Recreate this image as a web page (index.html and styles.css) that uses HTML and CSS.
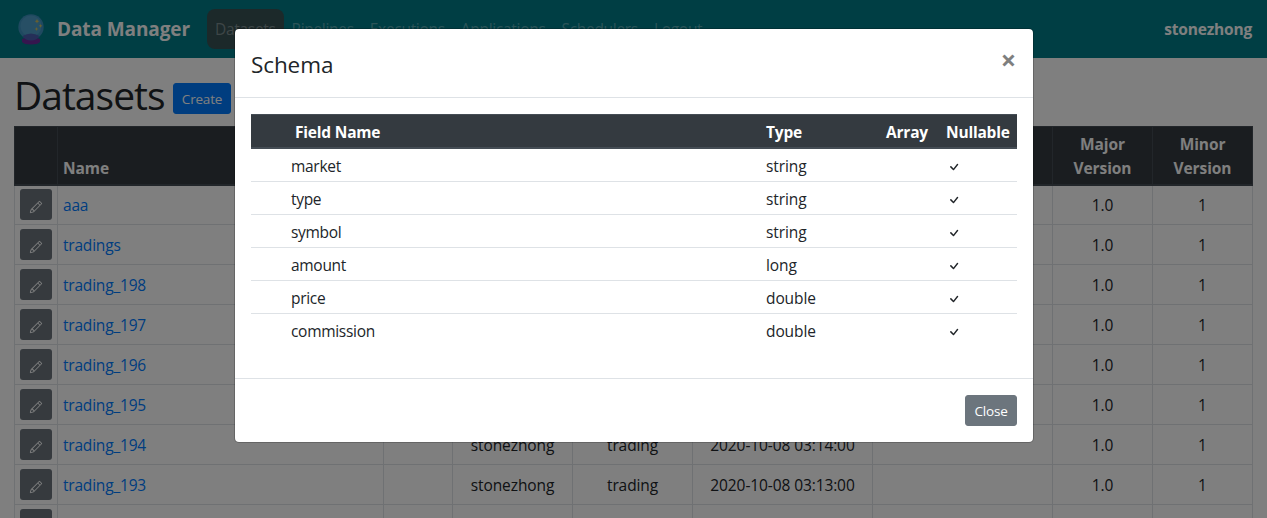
FILE: index.html
```html
<!DOCTYPE html>
<html lang="en">
<head>
<meta charset="utf-8">
<title>Data Manager</title>
<link rel="stylesheet" href="styles.css">
</head>
<body>
<svg class="defs" aria-hidden="true">
  <symbol id="pencil" viewBox="0 0 16 16"><path fill-rule="evenodd" d="M11.293 1.293a1 1 0 0 1 1.414 0l2 2a1 1 0 0 1 0 1.414l-9 9a1 1 0 0 1-.39.242l-3 1a1 1 0 0 1-1.266-1.265l1-3a1 1 0 0 1 .242-.391l9-9zM12 2l2 2-9 9-3 1 1-3 9-9z"/><path fill-rule="evenodd" d="M12.146 6.354l-2.5-2.5.708-.708 2.5 2.5-.707.708zM3 10v.5a.5.5 0 0 0 .5.5H4v.5a.5.5 0 0 0 .5.5H5v.5a.5.5 0 0 0 .5.5H6v-1.5a.5.5 0 0 0-.5-.5H5v-.5a.5.5 0 0 0-.5-.5H3z"/></symbol>
  <symbol id="check" viewBox="0 0 16 16"><path fill-rule="evenodd" d="M10.97 4.97a.75.75 0 0 1 1.071 1.05l-3.992 4.99a.75.75 0 0 1-1.08.02L4.324 8.384a.75.75 0 1 1 1.06-1.06l2.094 2.093 3.473-4.425a.236.236 0 0 1 .02-.022z"/></symbol>
</svg>
<nav class="navbar">
  <svg class="logo" viewBox="0 0 28 32">
    <path fill="#6a2c9c" d="M5 26q9-4 18 0v3q-2 2.500-9 2.500t-9-2.500z"/>
    <circle cx="14" cy="14" r="12.700" fill="#3f93c0"/>
    <circle cx="14" cy="13" r="10.500" fill="#4f9fca"/>
    <path fill="#4a5fb0" d="M5.500 23q8.500-5 17 0-3 4.500-8.500 4.500T5.500 23z"/>
    <path fill="#d0c060" d="M20 6l.7 1.500 1.500.7-1.500.7L20 10.500l-.7-1.600-1.500-.7 1.500-.7zM23.500 11l.6 1.200 1.200.6-1.200.6-.6 1.300-.6-1.300-1.200-.6 1.200-.6zM19.500 14l.6 1.400 1.400.6-1.400.6-.6 1.400-.6-1.400-1.400-.6 1.400-.6z"/>
  </svg>
  <span class="brand">Data Manager</span>
  <div class="links">
    <a class="link active">Datasets</a><a class="link">Pipelines</a><a class="link">Executions</a><a class="link">Applications</a><a class="link">Schedulers</a><a class="link">Logout</a>
  </div>
  <span class="user">stonezhong</span>
</nav>
<main class="page">
  <div class="title-row"><h1 class="title">Datasets</h1><button class="btn primary">Create</button></div>
  <table class="datasets">
    <colgroup><col class="c-edit"><col class="c-name"><col class="c-flag"><col class="c-mid"><col class="c-mid"><col class="c-date"><col class="c-date"><col class="c-ver"><col class="c-ver"></colgroup>
    <thead><tr><th></th><th class="left">Name</th><th></th><th></th><th></th><th></th><th></th><th>Major Version</th><th>Minor Version</th></tr></thead>
    <tbody id="rows"></tbody>
  </table>
</main>
<div class="backdrop"></div>
<section class="modal">
  <header class="modal-header"><h2 class="modal-title">Schema</h2><span class="close">×</span></header>
  <div class="modal-body">
    <table class="schema">
      <colgroup><col class="s-pad"><col class="s-name"><col class="s-type"><col class="s-array"><col class="s-null"></colgroup>
      <thead><tr><th></th><th class="field">Field Name</th><th>Type</th><th>Array</th><th>Nullable</th></tr></thead>
      <tbody id="fields"></tbody>
    </table>
  </div>
  <footer class="modal-footer"><button class="btn secondary">Close</button></footer>
</section>
<script src="app.js"></script>
</body>
</html>
```
FILE: styles.css
```css
* { box-sizing: border-box; }
body { margin: 0; height: 518px; overflow: hidden; background: #fff; color: #212529; font: 15.5px/24px "Open Sans", "Noto Sans", sans-serif; letter-spacing: -0.1px; }
.defs { position: absolute; width: 0; height: 0; }
.navbar { display: flex; align-items: center; height: 58px; padding: 0 15px 0 17px; background: #007c89; }
.logo { width: 28px; height: 32px; flex: none; }
.brand { margin-left: 12px; width: 150px; color: #fff; font-size: 19px; font-weight: 700; white-space: nowrap; }
.links { display: flex; flex: 1; }
.link { padding: 8px 8px; border-radius: 8px; color: rgba(255,255,255,.35); letter-spacing: -0.3px; white-space: nowrap; }
.link.active { background: #385254; }
.user { color: #fff; font-weight: 700; letter-spacing: -0.2px; }
.page { height: 460px; padding: 0 14px; overflow: hidden; }
.title-row { display: flex; align-items: center; height: 68px; padding-top: 12px; }
.title { width: 159px; margin: -7px 0 0; font-size: 39px; font-weight: 400; line-height: 48px; letter-spacing: -1px; white-space: nowrap; }
.btn { height: 31px; padding: 1px 0 0; border: 1px solid; border-radius: 3px; color: #fff; font: 13.5px/21px "Open Sans", sans-serif; letter-spacing: -0.2px; }
.primary { width: 58px; padding-top: 2px; background: #007bff; border-color: #007bff; }
.secondary { width: 52px; background: #6c757d; border-color: #6c757d; }
.datasets { width: 1239px; table-layout: fixed; border-collapse: collapse; text-align: center; }
.datasets th, .datasets td { padding: 4px 5px; border: 1px solid #dee2e6; }
.datasets thead th { height: 58px; padding-bottom: 4px; background: #343a40; border-color: #454d55; border-bottom-width: 2px; color: #fff; vertical-align: bottom; }
.datasets td { height: 40px; padding: 0 5px; }
.datasets .left { text-align: left; }
.c-edit { width: 43px; } .c-name { width: 326px; } .c-flag { width: 69px; } .c-mid { width: 120px; } .c-date { width: 180px; } .c-ver { width: 100px; }
.datasets .name { color: #007bff; letter-spacing: -0.2px; }
.edit { display: flex; align-items: center; justify-content: center; width: 32px; height: 31px; padding-top: 4px; border-radius: 3px; background: #6c757d; }
.edit svg { width: 14px; height: 14px; fill: #fff; }
.backdrop { position: absolute; inset: 0; background: rgba(0,0,0,.5); }
.modal { position: absolute; left: 234px; top: 28px; width: 800px; height: 415px; background: #fff; background-clip: padding-box; border: 1px solid rgba(0,0,0,.2); border-radius: 5px; }
.modal-header { display: flex; justify-content: space-between; height: 69px; padding: 18px 17px 0 16px; border-bottom: 1px solid #dee2e6; }
.modal-title { margin: 0; font-size: 22.5px; font-weight: 400; line-height: 36px; }
.close { color: #7f7f7f; font-size: 27px; font-weight: 700; line-height: 25px; }
.modal-body { height: 280px; padding: 16px; }
.schema { width: 766px; table-layout: fixed; border-collapse: separate; border-spacing: 0; text-align: left; line-height: 23px; }
.schema th { height: 35px; padding: 5px 4px 3px; background: #343a40; border-top: 1px solid #454d55; border-bottom: 2px solid #454d55; color: #fff; letter-spacing: -0.2px; }
.schema td { height: 33px; padding: 5px 4px 3px; border-top: 1px solid #dee2e6; }
.schema td:nth-child(2) { letter-spacing: -0.3px; }
.schema tbody tr:first-child td { height: 32px; border-top: 0; }
.schema .field { padding-left: 8px; }
.s-pad { width: 36px; } .s-name { width: 475px; } .s-type { width: 120px; } .s-array { width: 60px; } .s-null { width: 75px; }
.check { display: block; width: 16px; height: 16px; margin-top: 2px; fill: #212529; }
.modal-footer { display: flex; justify-content: flex-end; padding: 16px; border-top: 1px solid #dee2e6; }
```
FILE: app.js
```js
const datasets = [
  ["aaa", "03:20:00"], ["tradings", "03:19:00"], ["trading_198", "03:18:00"], ["trading_197", "03:17:00"],
  ["trading_196", "03:16:00"], ["trading_195", "03:15:00"], ["trading_194", "03:14:00"],
  ["trading_193", "03:13:00"]
];
const covered = datasets.length - 2;
const row = ([name, time], i) => {
  const detail = i >= covered
    ? `<td>stonezhong</td><td>trading</td><td>2020-10-08 ${time}</td>`
    : "<td></td><td></td><td></td>";
  return `<tr><td><span class="edit"><svg><use href="#pencil"/></svg></span></td><td class="left name">${name}</td><td></td>${detail}<td></td><td>1.0</td><td>1</td></tr>`;
};
const partial = `<tr><td><span class="edit"></span></td>${"<td></td>".repeat(8)}</tr>`;
document.getElementById("rows").innerHTML = datasets.map(row).join("") + partial;
const fields = [["market", "string"], ["type", "string"], ["symbol", "string"], ["amount", "long"], ["price", "double"], ["commission", "double"]];
document.getElementById("fields").innerHTML = fields.map(([name, type]) =>
  `<tr><td></td><td>${name}</td><td>${type}</td><td></td><td><svg class="check"><use href="#check"/></svg></td></tr>`
).join("");
```
